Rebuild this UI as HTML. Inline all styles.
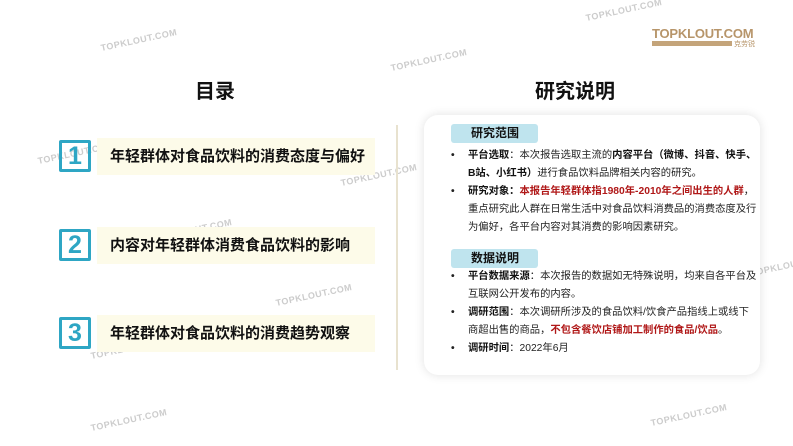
<!DOCTYPE html>
<html><head><meta charset="utf-8"><style>
body{margin:0;width:793px;height:446px;background:#fff;position:relative;overflow:hidden;font-family:"Liberation Sans","Noto Sans CJK SC",sans-serif;color:#111}
.a{position:absolute}
.t{font-size:20px;font-weight:bold}
.num{position:absolute;left:59px;width:26px;height:26px;border:3px solid #2ea6c4;color:#2ea6c4;font-size:25px;font-weight:bold;text-align:center;line-height:27px;border-radius:2px}
.bar{position:absolute;left:97px;width:278px;height:37px;background:#fdfbe9;font-size:15px;font-weight:bold;line-height:37px;padding-left:13px;box-sizing:border-box}
.card{left:424px;top:115px;width:336px;height:260px;background:#fff;border-radius:14px;box-shadow:0 0 10px rgba(0,0,0,.12)}
.tag{position:absolute;left:451px;width:87px;height:19px;background:#bfe4ee;border-radius:3px;font-size:12px;font-weight:bold;line-height:19px;padding-left:20px;box-sizing:border-box}
.p{position:absolute;left:468px;width:310px;white-space:nowrap;font-size:10.3px;line-height:18px;color:#222}
.p b{color:#111}
.p:before{content:"•";position:absolute;left:-17px;font-weight:bold}
.r{color:#b01818;font-weight:bold}
.wm{position:absolute;color:#ccc;font-size:9px;font-weight:bold;transform:rotate(-12deg);letter-spacing:.5px}
</style></head><body>
<div class="wm" style="left:100px;top:35px">TOPKLOUT.COM</div>
<div class="wm" style="left:390px;top:55px">TOPKLOUT.COM</div>
<div class="wm" style="left:585px;top:5px">TOPKLOUT.COM</div>
<div class="wm" style="left:37px;top:148px">TOPKLOUT.COM</div>
<div class="wm" style="left:340px;top:170px">TOPKLOUT.COM</div>
<div class="wm" style="left:155px;top:225px">TOPKLOUT.COM</div>
<div class="wm" style="left:275px;top:290px">TOPKLOUT.COM</div>
<div class="wm" style="left:90px;top:343px">TOPKLOUT.COM</div>
<div class="wm" style="left:90px;top:415px">TOPKLOUT.COM</div>
<div class="wm" style="left:650px;top:410px">TOPKLOUT.COM</div>
<div class="wm" style="left:750px;top:260px">TOPKLOUT.COM</div>
<div class="a" style="left:652px;top:26px;font-size:13px;font-weight:bold;color:#b7956a;letter-spacing:-.2px">TOPKLOUT.COM</div>
<div class="a" style="left:652px;top:41px;width:80px;height:5px;background:#c4a47a"></div>
<div class="a" style="left:734px;top:39px;font-size:7px;color:#b7956a">克劳锐</div>
<div class="a t" style="left:195px;top:75px">目录</div>
<div class="a t" style="left:535px;top:75px">研究说明</div>
<div class="num" style="top:140px">1</div><div class="bar" style="top:138px">年轻群体对食品饮料的消费态度与偏好</div>
<div class="num" style="top:229px">2</div><div class="bar" style="top:227px">内容对年轻群体消费食品饮料的影响</div>
<div class="num" style="top:317px">3</div><div class="bar" style="top:315px">年轻群体对食品饮料的消费趋势观察</div>
<div class="a" style="left:396px;top:125px;width:2px;height:245px;background:#e8e2cf"></div>
<div class="a card"></div>
<div class="tag" style="top:124px">研究范围</div>
<div class="p" style="top:147px"><b>平台选取</b>：本次报告选取主流的<b>内容平台（微博、抖音、快手、</b><br><b>B站、小红书）</b>进行食品饮料品牌相关内容的研究。</div>
<div class="p" style="top:183px"><b>研究对象：</b><span class="r">本报告年轻群体指1980年-2010年之间出生的人群</span>，<br>重点研究此人群在日常生活中对食品饮料消费品的消费态度及行<br>为偏好，各平台内容对其消费的影响因素研究。</div>
<div class="tag" style="top:249px">数据说明</div>
<div class="p" style="top:268px"><b>平台数据来源</b>：本次报告的数据如无特殊说明，均来自各平台及<br>互联网公开发布的内容。</div>
<div class="p" style="top:304px"><b>调研范围</b>：本次调研所涉及的食品饮料/饮食产品指线上或线下<br>商超出售的商品，<span class="r">不包含餐饮店铺加工制作的食品/饮品</span>。</div>
<div class="p" style="top:340px"><b>调研时间</b>：2022年6月</div>
</body></html>
